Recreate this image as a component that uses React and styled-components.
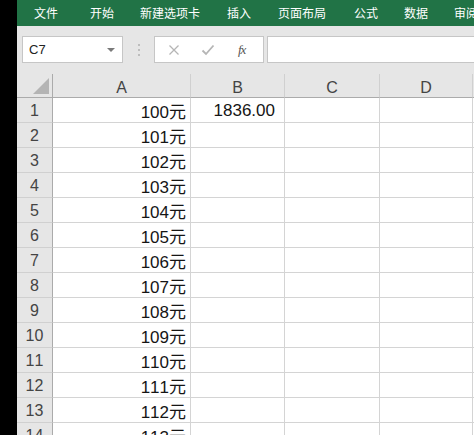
import React from "react"
import styled, { createGlobalStyle } from "styled-components"

const GlobalStyle = createGlobalStyle`
  html, body {
    margin: 0;
    padding: 0;
    background: #000;
    overflow: hidden;
  }
  body {
    font-family: "Liberation Sans", "Noto Sans CJK SC", sans-serif;
    font-kerning: none;
  }
`

const Screen = styled.div`
  display: flex;
  width: 474px;
  height: 435px;
  overflow: hidden;
  background: #000;
`

const LeftEdge = styled.div`
  width: 17px;
  flex: none;
  background: #000;
`

const Window = styled.div`
  flex: 1;
  display: flex;
  flex-direction: column;
  min-width: 0;
  overflow: hidden;
  background: #fff;
`

const Ribbon = styled.div`
  flex: none;
  height: 26px;
  background: #217346;
  display: flex;
  align-items: center;
  white-space: nowrap;
`

const Tab = styled.div`
  flex: none;
  color: #fff;
  font-family: "Noto Sans CJK SC", sans-serif;
  font-size: 12px;
  margin-left: ${(p) => p.$ml}px;
  line-height: 24px;
`

const FormulaBar = styled.div`
  flex: none;
  height: 48px;
  background: #e6e6e6;
  display: flex;
  align-items: flex-start;
  padding: 10px 0 0 5px;
  box-sizing: border-box;
`

const NameBox = styled.div`
  width: 101px;
  height: 27px;
  box-sizing: border-box;
  background: #fff;
  border: 1px solid #c6c6c6;
  display: flex;
  align-items: center;
  justify-content: space-between;
  padding: 0 7px 0 6px;
  font-size: 13px;
  color: #222;
`

const Caret = styled.span`
  width: 0;
  height: 0;
  border-left: 4px solid transparent;
  border-right: 4px solid transparent;
  border-top: 4px solid #7a7a7a;
`

const Grip = styled.div`
  width: 31px;
  height: 27px;
  display: flex;
  flex-direction: column;
  align-items: center;
  justify-content: center;
  gap: 3px;
  span {
    width: 2px;
    height: 2px;
    background: #bdbdbd;
  }
`

const FxBox = styled.div`
  width: 110px;
  height: 27px;
  box-sizing: border-box;
  background: #fff;
  border: 1px solid #c6c6c6;
  display: flex;
  align-items: center;
  padding-left: 13px;
  gap: 21px;
`

const Fx = styled.span`
  font-family: "Liberation Serif", serif;
  font-style: italic;
  font-size: 13px;
  color: #555;
  letter-spacing: -1px;
  margin-left: 2px;
`

const FormulaInput = styled.div`
  flex: 1;
  height: 27px;
  margin-left: 3px;
  box-sizing: border-box;
  background: #fff;
  border: 1px solid #c6c6c6;
  border-right: none;
`

const Sheet = styled.div`
  flex: none;
  display: grid;
  grid-template-columns: 36px 138px 94px 95px 93px 40px;
  grid-template-rows: 24px;
  grid-auto-rows: 25px;
  background: #fff;
`

const Corner = styled.div`
  background: #e6e6e6;
  border-right: 1px solid #ababab;
  border-bottom: 1px solid #ababab;
  box-sizing: border-box;
  display: flex;
  align-items: flex-end;
  justify-content: flex-end;
  padding: 0 3px 3px 0;
  &::after {
    content: "";
    width: 0;
    height: 0;
    border-left: 16px solid transparent;
    border-bottom: 16px solid #b4b4b4;
  }
`

const ColHead = styled.div`
  background: #e6e6e6;
  border-right: 1px solid #d0d0d0;
  border-bottom: 1px solid #ababab;
  box-sizing: border-box;
  display: flex;
  align-items: center;
  justify-content: center;
  font-size: 16px;
  color: #444;
  padding-top: 4px;
`

const RowHead = styled.div`
  background: #e6e6e6;
  border-right: 1px solid #ababab;
  border-bottom: 1px solid #d0d0d0;
  box-sizing: border-box;
  display: flex;
  align-items: center;
  justify-content: center;
  font-size: 16px;
  color: #444;
  padding-top: 1px;
`

const Cell = styled.div`
  border-right: 1px solid #d4d4d4;
  border-bottom: 1px solid #d4d4d4;
  box-sizing: border-box;
  display: flex;
  align-items: center;
  justify-content: flex-end;
  padding: 1px ${(p) => p.$pr || 4}px 0 0;
  font-family: "Liberation Sans", "Noto Sans CJK SC", sans-serif;
  font-size: 17px;
  font-variant-numeric: tabular-nums;
  color: #151515;
  white-space: nowrap;
`

const tabs = [
  ["文件", 17],
  ["开始", 32],
  ["新建选项卡", 26],
  ["插入", 27],
  ["页面布局", 27],
  ["公式", 28],
  ["数据", 26],
  ["审阅", 26],
]

const XIcon = () => (
  <svg width="12" height="12" viewBox="0 0 12 12">
    <path d="M1.5 1.5 L10.5 10.5 M10.5 1.5 L1.5 10.5" stroke="#b5b5b5" strokeWidth="1.3" fill="none" />
  </svg>
)

const CheckIcon = () => (
  <svg width="14" height="12" viewBox="0 0 14 12">
    <path d="M1.5 6.5 L5 10 L12.5 1.5" stroke="#b5b5b5" strokeWidth="1.8" fill="none" />
  </svg>
)

const rows = Array.from({ length: 14 }, (_, i) => i + 1)

const App = () => (
  <>
    <GlobalStyle />
    <Screen>
      <LeftEdge />
      <Window>
        <Ribbon>
          {tabs.map(([t, ml]) => (
            <Tab key={t} $ml={ml}>{t}</Tab>
          ))}
        </Ribbon>
        <FormulaBar>
          <NameBox>
            C7
            <Caret />
          </NameBox>
          <Grip>
            <span />
            <span />
            <span />
          </Grip>
          <FxBox>
            <XIcon />
            <CheckIcon />
            <Fx>fx</Fx>
          </FxBox>
          <FormulaInput />
        </FormulaBar>
        <Sheet>
          <Corner />
          <ColHead>A</ColHead>
          <ColHead>B</ColHead>
          <ColHead>C</ColHead>
          <ColHead>D</ColHead>
          <ColHead />
          {rows.map((r) => (
            <React.Fragment key={r}>
              <RowHead>{r}</RowHead>
              <Cell>{99 + r}元</Cell>
              <Cell $pr={9}>{r === 1 ? "1836.00" : ""}</Cell>
              <Cell />
              <Cell />
              <Cell />
            </React.Fragment>
          ))}
        </Sheet>
      </Window>
    </Screen>
  </>
)

export default App
